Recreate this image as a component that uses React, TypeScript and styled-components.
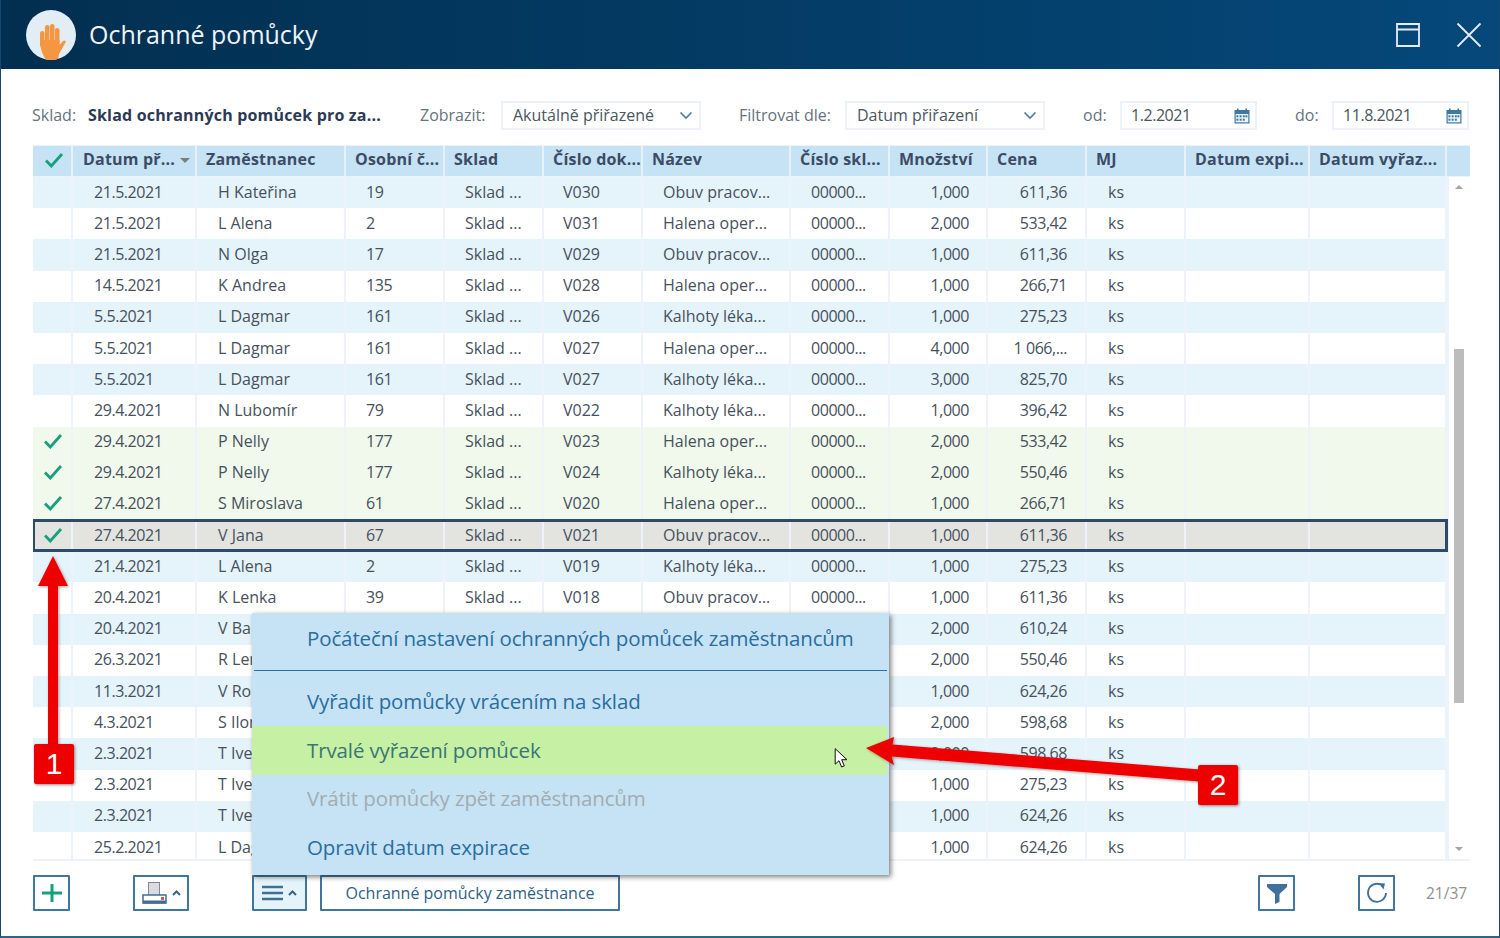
import React from "react";
import styled, { createGlobalStyle } from "styled-components";

const Global = createGlobalStyle`
  html, body { margin: 0; padding: 0; background: #fff; }
  * { box-sizing: border-box; }
  body { font-family: "Open Sans", "Noto Sans", sans-serif; overflow: hidden; }
`;

const COLS = "40px 124px 149px 99px 99px 99px 148px 99px 98px 99px 99px 124px 137px";

const Win = styled.div`
  position: relative;
  width: 1500px;
  height: 938px;
  border-left: 1px solid #16486f;
  border-right: 1px solid #16486f;
  border-bottom: 2px solid #2f6488;
  display: flex;
  flex-direction: column;
  overflow: hidden;
`;
const TitleBar = styled.header`
  height: 69px;
  margin: 0 -1px;
  flex: none;
  background: linear-gradient(90deg, #022f50 0%, #05487a 100%);
  display: flex;
  align-items: center;
  padding: 0 18px 0 26px;
  color: #eef4f9;
`;
const Avatar = styled.div`
  width: 50px;
  height: 50px;
  border-radius: 50%;
  background: #e3edf5;
  overflow: hidden;
  flex: none;
`;
const Title = styled.h1`
  font-size: 25px;
  font-weight: 400;
  margin: -2px 0 0 13px;
  flex: 1;
`;
const WinButton = styled.button<{ $ml: number }>`
  background: none;
  border: 0;
  padding: 0;
  margin-left: ${(p) => p.$ml}px;
  display: flex;
  color: #e6eef5;
`;
const Body = styled.main`
  flex: 1;
  padding: 32px 30px 0 31px;
  display: flex;
  flex-direction: column;
  min-height: 0;
`;
const Filters = styled.div`
  display: flex;
  height: 29px;
  align-items: center;
  font-size: 16px;
  line-height: 25px;
`;
const Group = styled.div<{ $ml?: number }>`
  display: flex;
  align-items: center;
  margin-left: ${(p) => p.$ml ?? 0}px;
`;
const Label = styled.span<{ $w: number }>`
  width: ${(p) => p.$w}px;
  color: #66727e;
`;
const StrongValue = styled.span`
  width: 332px;
  font-weight: 700;
  color: #2b3a55;
  letter-spacing: 0.18px;
`;
const Box = styled.div<{ $w: number }>`
  width: ${(p) => p.$w}px;
  height: 29px;
  border: 2px solid #edf1fa;
  display: flex;
  align-items: center;
  justify-content: space-between;
  padding: 0 6px 0 10px;
  color: #4a5561;
`;
const DateBox = styled(Box)`
  letter-spacing: -0.45px;
  padding: 0 5px 0 9px;
`;
const TableWrap = styled.section`
  margin: 15px 0 0 1px;
  width: 1437px;
`;
const HeadRow = styled.div`
  display: grid;
  grid-template-columns: ${COLS} 1fr;
  height: 32px;
  background: #c5e3f4;
  border: 0 solid #edf3fa;
  border-width: 1px 0;
`;
const HeadCell = styled.div`
  display: flex;
  align-items: center;
  padding: 0 0 5px 9px;
  font-size: 16px;
  font-weight: 700;
  letter-spacing: 0.2px;
  color: #3c4b66;
  border-right: 2px solid #e6f1f9;
  white-space: nowrap;
  &:first-child { padding: 0 0 2px 11px; }
  &:nth-child(2) { padding-left: 10px; }
  &:last-child { border-right: 0; }
`;
const SortMark = styled.i`
  width: 0;
  height: 0;
  margin: 3px 0 0 5px;
  border: 5px solid transparent;
  border-top: 5px solid #7d7d7d;
  border-bottom: 0;
`;
const TableBody = styled.div`
  display: flex;
  border-bottom: 2px solid #edf3fa;
  height: 684px;
  overflow: hidden;
`;
const Rows = styled.div`
  width: 1414px;
  flex: none;
  display: flex;
  flex-direction: column;
`;
const Row = styled.div<{ $kind: string }>`
  display: grid;
  grid-template-columns: ${COLS};
  height: 31.2px;
  flex: none;
  position: relative;
  color: #47515d;
  font-size: 16px;
  background: ${(p) =>
    p.$kind === "alt" ? "#e5f3fb" : p.$kind === "done" ? "#f0f9ec" : p.$kind === "sel" ? "#e3e4e0" : "#fff"};
  ${(p) => p.$kind === "sel" && "outline: 3px solid #2d4a69; outline-offset: -2px; z-index: 1;"}
`;
const Cell = styled.div<{ $right?: number; $left?: number; $tight?: boolean }>`
  display: flex;
  align-items: center;
  white-space: nowrap;
  overflow: hidden;
  border-right: 2px solid #eef3fb;
  justify-content: ${(p) => (p.$right ? "flex-end" : "flex-start")};
  padding: 0 ${(p) => p.$right ?? 0}px 2px ${(p) => p.$left ?? 0}px;
  letter-spacing: ${(p) => (p.$tight ? "-0.45px" : "0")};
`;
const CheckCell = styled(Cell)`
  justify-content: center;
  padding: 0 0 2px 2px;
`;
const ScrollTrack = styled.div`
  width: 23px;
  flex: none;
  background: #fff;
  border-left: 2px solid #edf3fa;
  display: flex;
  flex-direction: column;
  align-items: center;
  padding-right: 2px;
`;
const ScrollUp = styled.i`
  width: 0;
  height: 0;
  margin-top: 8px;
  border: 4px solid transparent;
  border-top: 0;
  border-bottom: 4px solid #a4a4a4;
`;
const Thumb = styled.div`
  width: 10px;
  height: 354px;
  margin-top: 160px;
  background: #bcbcbc;
`;
const ScrollDown = styled.i`
  width: 0;
  height: 0;
  margin-top: 144px;
  border: 4px solid transparent;
  border-bottom: 0;
  border-top: 4px solid #a4a4a4;
`;
const Footer = styled.footer`
  display: flex;
  align-items: center;
  margin: 14px 0 0 1px;
  height: 36px;
  width: 1437px;
`;
const ToolButton = styled.button<{ $w: number; $ml: number; $active?: boolean }>`
  width: ${(p) => p.$w}px;
  height: 36px;
  margin-left: ${(p) => p.$ml}px;
  flex: none;
  padding: 0;
  background: ${(p) => (p.$active ? "#e5f3fb" : "#fff")};
  border: 2px solid #3f769d;
  border-radius: 1px;
  display: flex;
  align-items: center;
  justify-content: center;
  gap: 4px;
`;
const TextButton = styled(ToolButton)`
  font: 400 16px "Open Sans", sans-serif;
  color: #2f5f86;
`;
const Counter = styled.span`
  margin-left: 31px;
  font-size: 15.5px;
  color: #8e9091;
`;
const Menu = styled.nav`
  position: absolute;
  left: 251px;
  top: 613px;
  width: 637px;
  height: 262px;
  background: #c5e3f4;
  box-shadow: 2px 2px 5px rgba(40, 40, 40, 0.6);
  z-index: 3;
  display: flex;
  flex-direction: column;
`;
const MenuFirst = styled.div`
  height: 58px;
  margin: 0 2px;
  padding: 9px 0 0 53px;
  font-size: 20.5px;
  letter-spacing: -0.12px;
  line-height: 32px;
  color: #2a6da0;
  border-bottom: 1.5px solid #2f6f9e;
  white-space: nowrap;
`;
const MenuItem = styled.div<{ $state?: string; $lift?: number }>`
  height: 49px;
  display: flex;
  align-items: center;
  padding: 0 0 ${(p) => p.$lift ?? 2}px 55px;
  margin-right: 2px;
  font-size: 20.5px;
  letter-spacing: -0.12px;
  white-space: nowrap;
  background: ${(p) => (p.$state === "hover" ? "#c6f0a4" : "transparent")};
  color: ${(p) => (p.$state === "hover" ? "#3a7575" : p.$state === "off" ? "#a2acb3" : "#2a6da0")};
`;
const MenuGap = styled.div`
  height: 6px;
`;
const Overlay = styled.svg`
  position: absolute;
  left: -1px;
  top: 0;
  z-index: 4;
  pointer-events: none;
`;
const Badge = styled.div<{ $x: number; $y: number }>`
  position: absolute;
  left: ${(p) => p.$x}px;
  top: ${(p) => p.$y}px;
  width: 40px;
  height: 40px;
  background: #ee0000;
  border-radius: 2px;
  box-shadow: 1px 1px 3px rgba(0, 0, 0, 0.45);
  color: #fff;
  font: 400 30px "Liberation Sans", Arial, sans-serif;
  display: flex;
  align-items: center;
  justify-content: center;
  z-index: 5;
`;

const Check = () => (
  <svg width="20" height="16" viewBox="0 0 20 16">
    <path d="M2 8.500 7.300 14 18 2" fill="none" stroke="#16a07c" strokeWidth="2.800" />
  </svg>
);
const Chevron = () => (
  <svg width="14" height="9" viewBox="0 0 14 9">
    <path d="M1.500 1.500 7 7l5.500-5.500" fill="none" stroke="#4c7ba0" strokeWidth="1.600" />
  </svg>
);
const Calendar = () => (
  <svg width="16" height="16" viewBox="0 0 16 16">
    <rect x="0.5" y="2" width="15" height="13.5" fill="#3f78a3" />
    <rect x="3" y="0.5" width="1.6" height="3" fill="#3f78a3" />
    <rect x="11.4" y="0.5" width="1.6" height="3" fill="#3f78a3" />
    <rect x="1.7" y="6" width="12.6" height="8.3" fill="#eef5fa" />
    {[3, 6.2, 9.4, 12].map((x) => (
      <rect key={x} x={x - 0.6} y="7.3" width="2" height="2" fill="#3f78a3" />
    ))}
    {[3, 6.2, 9.4].map((x) => (
      <rect key={x} x={x - 0.6} y="10.7" width="2" height="2" fill="#3f78a3" />
    ))}
  </svg>
);
const Caret = () => (
  <svg width="9" height="6" viewBox="0 0 9 6">
    <path d="M1 5 4.500 1.500 8 5" fill="none" stroke="#36658a" strokeWidth="2" />
  </svg>
);

type R = [string, string, string, string, string, string, string, string];
const data: R[] = [
  ["21.5.2021", "H Kateřina", "19", "V030", "Obuv pracov...", "1,000", "611,36", "alt"],
  ["21.5.2021", "L Alena", "2", "V031", "Halena oper...", "2,000", "533,42", ""],
  ["21.5.2021", "N Olga", "17", "V029", "Obuv pracov...", "1,000", "611,36", "alt"],
  ["14.5.2021", "K Andrea", "135", "V028", "Halena oper...", "1,000", "266,71", ""],
  ["5.5.2021", "L Dagmar", "161", "V026", "Kalhoty léka...", "1,000", "275,23", "alt"],
  ["5.5.2021", "L Dagmar", "161", "V027", "Halena oper...", "4,000", "1 066,...", ""],
  ["5.5.2021", "L Dagmar", "161", "V027", "Kalhoty léka...", "3,000", "825,70", "alt"],
  ["29.4.2021", "N Lubomír", "79", "V022", "Kalhoty léka...", "1,000", "396,42", ""],
  ["29.4.2021", "P Nelly", "177", "V023", "Halena oper...", "2,000", "533,42", "done"],
  ["29.4.2021", "P Nelly", "177", "V024", "Kalhoty léka...", "2,000", "550,46", "done"],
  ["27.4.2021", "S Miroslava", "61", "V020", "Halena oper...", "1,000", "266,71", "done"],
  ["27.4.2021", "V Jana", "67", "V021", "Obuv pracov...", "1,000", "611,36", "sel"],
  ["21.4.2021", "L Alena", "2", "V019", "Kalhoty léka...", "1,000", "275,23", "alt"],
  ["20.4.2021", "K Lenka", "39", "V018", "Obuv pracov...", "1,000", "611,36", ""],
  ["20.4.2021", "V Ba", "", "", "", "2,000", "610,24", "alt"],
  ["26.3.2021", "R Len", "", "", "", "2,000", "550,46", ""],
  ["11.3.2021", "V Ro", "", "", "", "1,000", "624,26", "alt"],
  ["4.3.2021", "S Ilon", "", "", "", "2,000", "598,68", ""],
  ["2.3.2021", "T Ive", "", "", "", "2,000", "598,68", "alt"],
  ["2.3.2021", "T Ive", "", "", "", "1,000", "275,23", ""],
  ["2.3.2021", "T Ive", "", "", "", "1,000", "624,26", "alt"],
  ["25.2.2021", "L Dag", "", "", "", "1,000", "624,26", ""],
];
const heads = [
  "Zaměstnanec", "Osobní č...", "Sklad", "Číslo dok...", "Název", "Číslo skl...",
  "Množství", "Cena", "MJ", "Datum expi...", "Datum vyřaz...",
];

export default function App() {
  return (
    <Win>
      <Global />
      <TitleBar>
        <Avatar>
          <svg width="50" height="50" viewBox="0 0 50 50">
            <g fill="#f59640">
              <rect x="14" y="21" width="4.500" height="16" rx="2.200" />
              <rect x="19" y="15" width="4.500" height="20" rx="2.200" />
              <rect x="24" y="14" width="4.500" height="20" rx="2.200" />
              <rect x="29" y="18" width="4.500" height="18" rx="2.200" />
              <path d="M14 30h19.500v5l3.500-4c1.500-1.300 3.500-.3 2.500 1.500L33 44l-1 6H20c-2-4-6-9-6-20z" />
            </g>
          </svg>
        </Avatar>
        <Title>Ochranné pomůcky</Title>
        <WinButton $ml={0}>
          <svg width="24" height="24" viewBox="0 0 24 24">
            <path d="M1 1h22v22H1zM1 6.500h22" fill="none" stroke="currentColor" strokeWidth="1.800" />
          </svg>
        </WinButton>
        <WinButton $ml={36}>
          <svg width="26" height="26" viewBox="0 0 26 26">
            <path d="M1.500 1.500l23 23M24.500 1.500l-23 23" fill="none" stroke="currentColor" strokeWidth="1.800" />
          </svg>
        </WinButton>
      </TitleBar>
      <Body>
        <Filters>
          <Group>
            <Label $w={56}>Sklad:</Label>
            <StrongValue>Sklad ochranných pomůcek pro za...</StrongValue>
          </Group>
          <Group>
            <Label $w={81}>Zobrazit:</Label>
            <Box $w={200}>
              Akutálně přiřazené
              <Chevron />
            </Box>
          </Group>
          <Group $ml={38}>
            <Label $w={106}>Filtrovat dle:</Label>
            <Box $w={200}>
              Datum přiřazení
              <Chevron />
            </Box>
          </Group>
          <Group $ml={38}>
            <Label $w={37}>od:</Label>
            <DateBox $w={137}>
              1.2.2021
              <Calendar />
            </DateBox>
          </Group>
          <Group $ml={38}>
            <Label $w={37}>do:</Label>
            <DateBox $w={137}>
              11.8.2021
              <Calendar />
            </DateBox>
          </Group>
        </Filters>
        <TableWrap>
          <HeadRow>
            <HeadCell>
              <Check />
            </HeadCell>
            <HeadCell>
              Datum př...
              <SortMark />
            </HeadCell>
            {heads.map((h) => (
              <HeadCell key={h}>{h}</HeadCell>
            ))}
            <HeadCell />
          </HeadRow>
          <TableBody>
            <Rows>
              {data.map((r, i) => (
                <Row key={i} $kind={r[7]}>
                  <CheckCell>{r[7] === "done" || r[7] === "sel" ? <Check /> : null}</CheckCell>
                  <Cell $left={21} $tight>{r[0]}</Cell>
                  <Cell $left={21}>{r[1]}</Cell>
                  <Cell $left={20} $tight>{r[2]}</Cell>
                  <Cell $left={20}>{r[3] ? "Sklad ..." : ""}</Cell>
                  <Cell $left={19}>{r[3]}</Cell>
                  <Cell $left={20}>{r[4]}</Cell>
                  <Cell $left={20} $tight>{r[3] ? "00000..." : ""}</Cell>
                  <Cell $right={17} $tight>{r[5]}</Cell>
                  <Cell $right={18} $tight>{r[6]}</Cell>
                  <Cell $left={21}>ks</Cell>
                  <Cell />
                  <Cell />
                </Row>
              ))}
            </Rows>
            <ScrollTrack>
              <ScrollUp />
              <Thumb />
              <ScrollDown />
            </ScrollTrack>
          </TableBody>
        </TableWrap>
        <Footer>
          <ToolButton $w={37} $ml={0}>
            <svg width="24" height="24" viewBox="0 0 24 24">
              <path d="M12 3v18M2 12h20" stroke="#16a07c" strokeWidth="3" fill="none" />
            </svg>
          </ToolButton>
          <ToolButton $w={56} $ml={63}>
            <svg width="26" height="24" viewBox="0 0 26 24">
              <rect x="6.500" y="1.500" width="11" height="14" fill="#d9dbe0" stroke="#7d8a96" />
              <rect x="1" y="14" width="23" height="8" fill="#fff" stroke="#3f6f94" strokeWidth="1.500" />
              <rect x="1" y="19.500" width="23" height="3" fill="#3f6f94" />
              <rect x="19" y="16" width="3" height="3" fill="#e0524f" />
            </svg>
            <Caret />
          </ToolButton>
          <ToolButton $w={55} $ml={63} $active>
            <svg width="22" height="18" viewBox="0 0 22 18">
              <path d="M0 3h21M0 9h21M0 15h21" stroke="#3f6f94" strokeWidth="2.500" fill="none" />
            </svg>
            <Caret />
          </ToolButton>
          <TextButton $w={300} $ml={13}>Ochranné pomůcky zaměstnance</TextButton>
          <ToolButton $w={37} $ml={638}>
            <svg width="24" height="26" viewBox="0 0 24 26">
              <path d="M2 4h20v3l-7.500 7v8l-4.500 2V14L2 7z" fill="#3f7199" />
            </svg>
          </ToolButton>
          <ToolButton $w={37} $ml={63}>
            <svg width="24" height="26" viewBox="0 0 24 26">
              <path d="M15.500 4.500A9 9 0 1 0 21 13" fill="none" stroke="#3f7199" strokeWidth="1.800" />
              <path d="M13.500 3 20 3.500l-1.500 6z" fill="#3f7199" />
            </svg>
          </ToolButton>
          <Counter>21/37</Counter>
        </Footer>
      </Body>
      <Menu>
        <MenuFirst>Počáteční nastavení ochranných pomůcek zaměstnancům</MenuFirst>
        <MenuGap />
        <MenuItem>Vyřadit pomůcky vrácením na sklad</MenuItem>
        <MenuItem $state="hover">Trvalé vyřazení pomůcek</MenuItem>
        <MenuItem $state="off" $lift={4}>Vrátit pomůcky zpět zaměstnancům</MenuItem>
        <MenuItem $lift={4}>Opravit datum expirace</MenuItem>
      </Menu>
      <Overlay width="1500" height="938" viewBox="0 0 1500 938">
        <defs>
          <filter id="soft" x="-20%" y="-20%" width="140%" height="140%">
            <feDropShadow dx="1" dy="1" stdDeviation="1.500" floodColor="#000" floodOpacity="0.35" />
          </filter>
        </defs>
        <path d="M53 556 68 586H58V750H48V586H38z" fill="#ee0000" filter="url(#soft)" />
        <path d="M866 748 894 737 892.500 744.500 1200 769.500 1199 781.500 891.500 756.500 894 765z" fill="#ee0000" filter="url(#soft)" />
        <g transform="translate(834.500 748)">
          <path
            d="M.7.7v15.500l3.800-3.500 2.600 6.300 2.700-1.100-2.600-6.200h5.300z"
            fill="#fff"
            stroke="#111"
            strokeWidth="1"
          />
        </g>
      </Overlay>
      <Badge $x={33} $y={744}>1</Badge>
      <Badge $x={1197} $y={765}>2</Badge>
    </Win>
  );
}
